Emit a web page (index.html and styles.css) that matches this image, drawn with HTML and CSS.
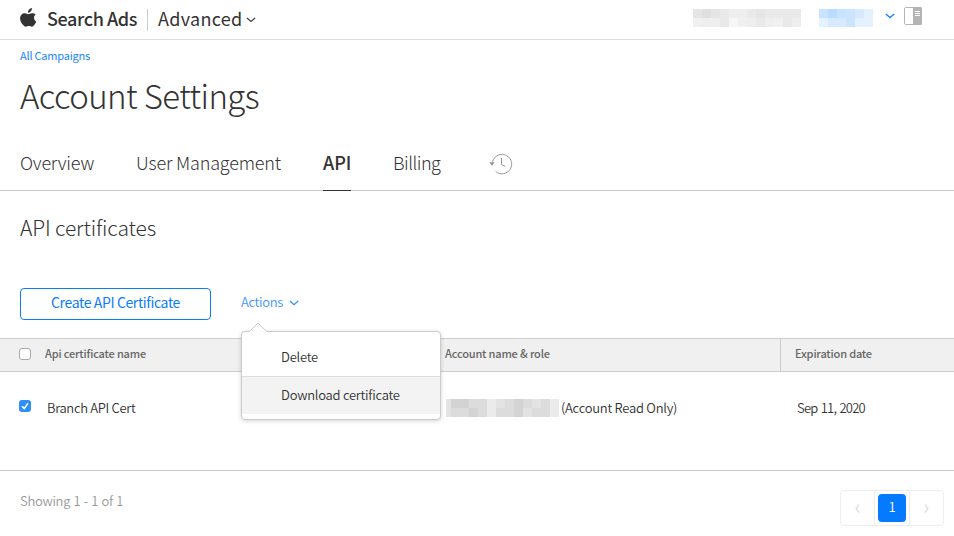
FILE: index.html
```html
<!DOCTYPE html>
<html lang="en">
<head>
<meta charset="utf-8">
<title>Account Settings</title>
<link rel="stylesheet" href="styles.css">
</head>
<body>
<header class="topbar">
  <svg class="apple" width="17" height="20" viewBox="0 0 17 20"><path d="M11.900 0c.2 1.200-.3 2.400-1 3.300-.7.9-1.800 1.500-2.900 1.400-.2-1.200.4-2.300 1-3C9.700.8 10.900.1 11.900 0zM15.700 6.600c-1.200.8-1.700 1.800-1.700 3.200 0 1.700.9 3 2.200 3.600-.4 1.200-.9 2.200-1.600 3.200-.8 1.100-1.500 2.100-2.700 2.100s-1.600-.7-3-.7-1.900.7-3 .7c-1.200 0-2.300-1.100-3.300-2.300C1 14.600.1 12.500.1 10.400c0-3.200 2.100-5.200 4.800-5.200 1.400 0 2.500 1 3.400 1 .8 0 2-1 3.600-1 1.500 0 2.900.5 3.800 1.400z" fill="#333"/></svg>
  <span class="brand">Search Ads</span>
  <span class="divider"></span>
  <span class="product">Advanced</span>
  <svg class="chev" width="10" height="6" viewBox="0 0 10 6"><path d="M1 1l4 3.500L9 1" fill="none" stroke="#444" stroke-width="1.300"/></svg>
  <div class="account">
    <div class="mosaic">
      <i class="a1"></i><i class="a2"></i><i class="a1"></i><i class="a3"></i><i class="a4"></i><i class="a4"></i><i class="a3"></i><i class="a1"></i><i class="a3"></i><i class="a3"></i><i class="a3"></i><i class="a3"></i>
      <i class="a5"></i><i class="a4"></i><i class="a4"></i><i class="a3"></i><i class="a6"></i><i class="a5"></i><i class="a4"></i><i class="a3"></i><i class="a4"></i><i class="a5"></i><i class="a3"></i><i class="a4"></i>
    </div>
    <div class="mosaic blue">
      <i class="b2"></i><i class="b1"></i><i class="b2"></i><i class="b3"></i><i class="b4"></i><i class="b5"></i>
      <i class="b5"></i><i class="b4"></i><i class="b4"></i><i class="b3"></i><i class="b5"></i><i class="b5"></i>
    </div>
    <svg class="acct-chev" width="10" height="6" viewBox="0 0 10 6"><path d="M.8 1L5 4.600 9.200 1" fill="none" stroke="#1c86ff" stroke-width="1.500"/></svg>
    <svg class="panel" width="18" height="18" viewBox="0 0 18 18"><rect x=".5" y=".5" width="17" height="17" rx="1.500" fill="#fff" stroke="#b4b4b4"/><path d="M9 0h7.500A1.500 1.500 0 0 1 18 1.500v15a1.500 1.500 0 0 1-1.500 1.500H9z" fill="#b4b4b4"/><path d="M11 4.500h5M11 6.500h5M11 8.500h5" stroke="#fff"/></svg>
  </div>
</header>

<div class="crumbs"><a>All Campaigns</a></div>
<h1>Account Settings</h1>
<nav class="tabs">
  <a class="t1">Overview</a>
  <a class="t2">User Management</a>
  <a class="t3">API</a>
  <a class="t4">Billing</a>
  <svg class="history" width="24" height="22" viewBox="0 0 24 22"><path d="M3.300 10.500A9.700 9.700 0 1 1 6.600 18.400" fill="none" stroke="#999" stroke-width="1"/><path d="M12.500 5v6.500l4 2" fill="none" stroke="#999"/><path d="M.3 9.300h5.400L3 13z" fill="#999"/></svg>
</nav>

<h2>API certificates</h2>
<div class="toolbar">
  <button class="create">Create API Certificate</button>
  <div class="actions">
    <span class="act">Actions</span>
    <svg width="10" height="6" viewBox="0 0 10 6"><path d="M.8 1L5 4.800 9.200 1" fill="none" stroke="#2e90ff" stroke-width="1.200"/></svg>
    <div class="menu">
      <svg class="tip" width="18" height="10" viewBox="0 0 18 10"><path d="M0 10L9 1l9 9" fill="#fff" stroke="#ccc"/></svg>
      <div class="item delete">Delete</div>
      <div class="item hover">Download certificate</div>
    </div>
  </div>
</div>

<section class="table">
  <div class="row head">
    <div class="cell"><span class="box"></span><span>Api certificate name</span></div>
    <div class="cell role"><span>Account name &amp; role</span></div>
    <div class="cell exp"><span>Expiration date</span></div>
  </div>
  <div class="row body">
    <div class="cell"><span class="box on"><svg width="12" height="12" viewBox="0 0 12 12"><path d="M3 6.300l2.200 2.300L9 3.300" fill="none" stroke="#fff" stroke-width="1.600"/></svg></span><span class="name">Branch API Cert</span></div>
    <div class="cell role">
      <div class="mosaic grey">
        <i class="g3"></i><i class="g1"></i><i class="g1"></i><i class="g2"></i><i class="g2"></i><i class="g4"></i><i class="g3"></i><i class="g2"></i><i class="g1"></i><i class="g2"></i><i class="g3"></i><i class="g2"></i><i class="g4"></i>
        <i class="g3"></i><i class="g2"></i><i class="g2"></i><i class="g1"></i><i class="g2"></i><i class="g4"></i><i class="g2"></i><i class="g2"></i><i class="g1"></i><i class="g3"></i><i class="g2"></i><i class="g2"></i><i class="g4"></i>
      </div>
      <span>(Account Read Only)</span>
    </div>
    <div class="cell exp"><span class="date">Sep 11, 2020</span></div>
  </div>
</section>

<footer class="footer">
  <span class="count">Showing 1 - 1 of 1</span>
  <div class="pager">
    <span class="pg"><svg width="5" height="9" viewBox="0 0 5 9"><path d="M4 .5L1 4.500l3 4" fill="none" stroke="#ddd" stroke-width="1.300"/></svg></span>
    <span class="pg mid"><b>1</b></span>
    <span class="pg"><svg width="5" height="9" viewBox="0 0 5 9"><path d="M1 .5l3 4-3 4" fill="none" stroke="#ddd" stroke-width="1.300"/></svg></span>
  </div>
</footer>
</body>
</html>
```
FILE: styles.css
```css
* { box-sizing: border-box; }
body {
  margin: 0;
  width: 954px;
  height: 536px;
  overflow: hidden;
  background: #fff;
  color: #333;
  font-family: "Noto Sans CJK SC", "Open Sans", sans-serif;
  font-size: 13px;
  font-weight: 350;
}
h1, h2 { margin: 0; font-weight: 300; }
span, a { white-space: nowrap; }
.topbar { display: flex; align-items: center; height: 40px; padding: 0 32px 0 20px; border-bottom: 1px solid #ddd; }
.apple { margin-top: -4px; }
.brand { width: 90px; margin-left: 10px; font-size: 18px; font-weight: 500; line-height: 36px; margin-top: -3px; letter-spacing: -.41px; }
.divider { width: 1px; height: 22px; margin: 0 10px; background: #ccc; }
.product { width: 85px; font-size: 18px; font-weight: 400; line-height: 36px; margin-top: -3px; letter-spacing: .3px; }
.chev { margin-left: 3px; }
.account { display: flex; align-items: center; margin-left: auto; margin-top: -7px; }
.mosaic { display: grid; grid-template-columns: repeat(12, 9px); grid-auto-rows: 9px; margin-top: 4px; }
.mosaic.blue { grid-template-columns: repeat(6, 9px); margin-left: 18px; }
.acct-chev { margin-left: 12px; }
.panel { margin-left: 9px; }
.crumbs { height: 25px; padding: 5px 20px 0; font-size: 11px; font-weight: 400; line-height: 20px; color: #1c86ff; letter-spacing: -.21px; }
h1 { margin-top: 10px; padding-left: 20px; font-size: 33px; line-height: 40px; letter-spacing: -.58px; }
.tabs { display: flex; height: 49px; margin-top: 27px; padding-left: 20px; border-bottom: 1px solid #ccc; font-size: 18px; font-weight: 300; line-height: 40px; }
.tabs a { height: 49px; }
.t1 { width: 74px; margin-right: 42px; letter-spacing: -.23px; }
.t2 { width: 145px; margin-right: 42px; letter-spacing: -.18px; }
.t3 { width: 28px; margin-right: 42px; font-weight: 500; letter-spacing: 0; border-bottom: 1px solid #333; }
.t4 { width: 47px; margin-right: 49px; letter-spacing: -.5px; }
.history { margin-top: 11px; }
h2 { margin-top: 21px; padding-left: 20px; font-size: 21px; line-height: 30px; letter-spacing: -.14px; }
.toolbar { display: flex; height: 32px; margin: 46px 20px 18px; }
.create { width: 191px; height: 32px; padding: 0 0 4px; border: 1px solid #0a7cff; border-radius: 4px; background: #fff; color: #0a7cff; font: 400 14px/26px "Noto Sans CJK SC", sans-serif; letter-spacing: -.37px; }
.actions { position: relative; display: flex; align-items: center; margin-left: 30px; padding-bottom: 3px; color: #3b97ff; line-height: 28px; letter-spacing: -.35px; }
.act { width: 42px; margin: -1px 6px 0 0; }
.menu { position: absolute; z-index: 2; left: 0; top: 43px; width: 200px; height: 89px; padding-top: 6px; border: 1px solid #ccc; border-radius: 4px; background: #fff; box-shadow: 0 1px 4px rgba(0,0,0,.18); color: #333; letter-spacing: -.25px; }
.tip { position: absolute; left: 7px; top: -10px; }
.item { height: 38px; padding-left: 39px; line-height: 38px; }
.item.hover { border-top: 1px solid #ddd; background: #f3f3f3; line-height: 36px; }
.row { display: grid; grid-template-columns: 445px 335px 1fr; }
.cell { display: flex; align-items: flex-start; }
.head { height: 34px; border: 1px solid #ccc; border-width: 1px 0; background: #f0f0f0; color: #666; font-size: 11px; font-weight: 500; line-height: 29px; letter-spacing: -.17px; }
.head .exp { border-left: 1px solid #ccc; padding-left: 14px; }
.box { width: 12px; height: 12px; margin: 9px 14px 0 19px; border: 1px solid #aaa; border-radius: 3px; background: #fff; }
.box.on { margin: 28px 16px 0 19px; border: 0; background: #2e8ffb; }
.box svg { display: block; }
.body { height: 99px; border-bottom: 1px solid #ccc; line-height: 30px; letter-spacing: -.26px; }
.body .cell > span:last-child { margin-top: 21px; }
.body .exp { padding-left: 17px; }
.name { letter-spacing: -.32px; }
.date { letter-spacing: -.75px; word-spacing: 1px; }
.mosaic.grey { grid-template-columns: 5px repeat(12, 9px); margin: 27px 2px 0 1px; }
.footer { display: flex; justify-content: space-between; padding: 19px 10px 0 20px; }
.count { color: #999; line-height: 21px; letter-spacing: -.3px; word-spacing: .8px; }
.pager { display: flex; width: 104px; height: 36px; border: 1px solid #eee; border-radius: 4px; }
.pg { display: flex; flex: 1; align-items: center; justify-content: center; }
.pg.mid { flex: 0 0 36px; border: 1px solid #eee; border-width: 0 1px; }
.pg b { width: 28px; height: 28px; border-radius: 4px; background: #057aff; color: #fff; font-weight: 350; font-size: 13px; line-height: 26px; text-align: center; }
.a1 { background: #e5e5e5; } .a2 { background: #dfdfdf; } .a3 { background: #e9e9e9; } .a4 { background: #eee; } .a5 { background: #f0f0f0; } .a6 { background: #f6f6f6; }
.b1 { background: #b8dbff; } .b2 { background: #c8e2ff; } .b3 { background: #cde4ff; } .b4 { background: #d6e9ff; } .b5 { background: #e4f1ff; }
.g1 { background: #d3d3d3; } .g2 { background: #dcdcdc; } .g3 { background: #e3e3e3; } .g4 { background: #ebebeb; }
```
